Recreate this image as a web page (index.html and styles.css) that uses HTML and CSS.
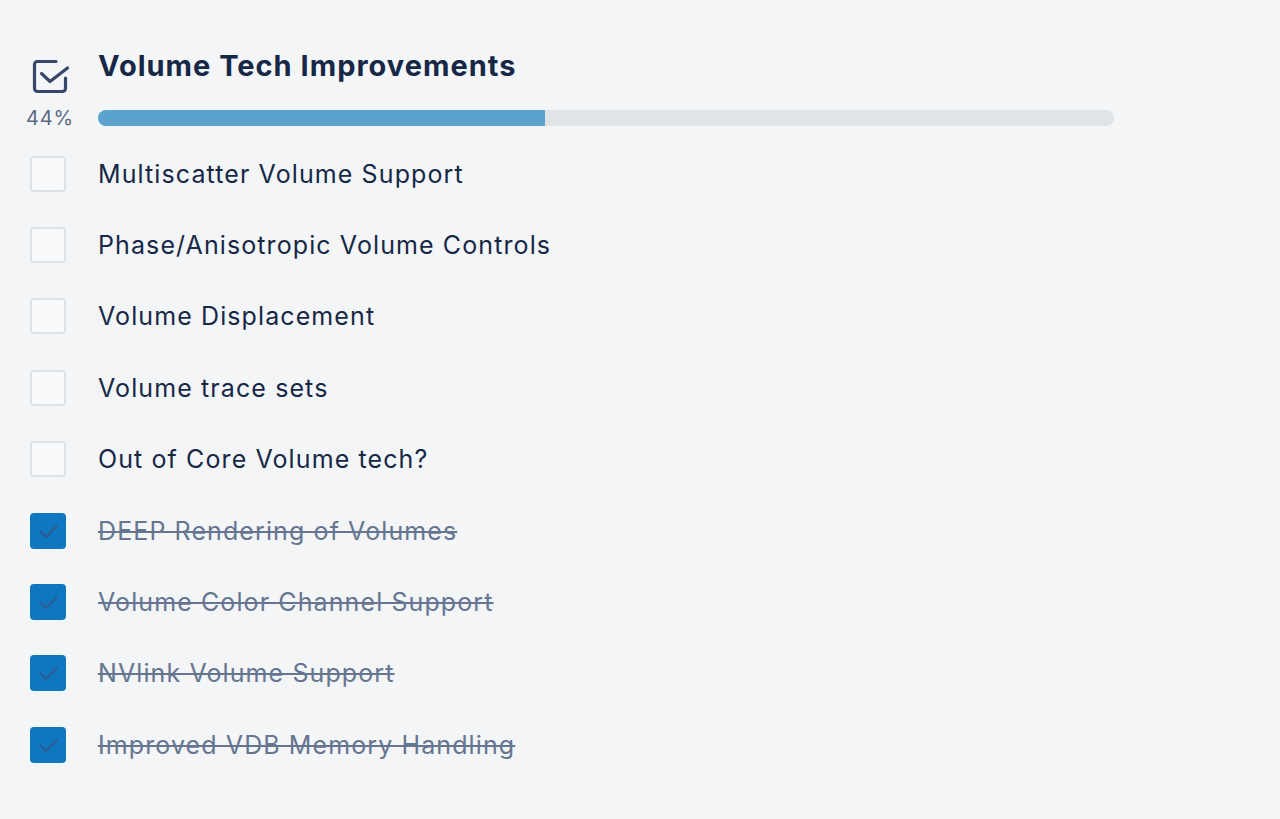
FILE: index.html
```html
<!DOCTYPE html>
<html>
<head>
<meta charset="utf-8">
<link rel="stylesheet" href="styles.css">
</head>
<body>
<div class="list">
  <div class="header">
    <div class="side">
      <svg class="hicon" viewBox="0 0 38 36" width="38" height="36">
        <path d="M33.5 20v10.5a3 3 0 0 1-3 3h-25a3 3 0 0 1-3-3v-24a3 3 0 0 1 3-3H24" fill="none" stroke="#38486a" stroke-width="3.2" stroke-linecap="round" stroke-linejoin="round"/>
        <path d="M9.5 15.5l8.5 8L35.5 10" fill="none" stroke="#38486a" stroke-width="3.2" stroke-linecap="round" stroke-linejoin="round"/>
      </svg>
      <div class="pct">44%</div>
    </div>
    <div class="main">
      <h1 class="title">Volume Tech Improvements</h1>
      <div class="bar"><div class="fill" style="width:44%"></div></div>
    </div>
  </div>
  <div class="items">
    <div class="item"><span class="box"></span><span class="label">Multiscatter Volume Support</span></div>
    <div class="item"><span class="box"></span><span class="label">Phase/Anisotropic Volume Controls</span></div>
    <div class="item"><span class="box"></span><span class="label">Volume Displacement</span></div>
    <div class="item"><span class="box"></span><span class="label">Volume trace sets</span></div>
    <div class="item"><span class="box"></span><span class="label">Out of Core Volume tech?</span></div>
    <div class="item done"><span class="box"><svg viewBox="0 0 36 36" width="36" height="36"><path d="M10.5 18.5l5.5 5.5 10.5-10.5" fill="none" stroke="#2c5d92" stroke-width="2.4" stroke-linecap="round" stroke-linejoin="round"/></svg></span><span class="label">DEEP Rendering of Volumes</span></div>
    <div class="item done"><span class="box"><svg viewBox="0 0 36 36" width="36" height="36"><path d="M10.5 18.5l5.5 5.5 10.5-10.5" fill="none" stroke="#2c5d92" stroke-width="2.4" stroke-linecap="round" stroke-linejoin="round"/></svg></span><span class="label">Volume Color Channel Support</span></div>
    <div class="item done"><span class="box"><svg viewBox="0 0 36 36" width="36" height="36"><path d="M10.5 18.5l5.5 5.5 10.5-10.5" fill="none" stroke="#2c5d92" stroke-width="2.4" stroke-linecap="round" stroke-linejoin="round"/></svg></span><span class="label">NVlink Volume Support</span></div>
    <div class="item done"><span class="box"><svg viewBox="0 0 36 36" width="36" height="36"><path d="M10.5 18.5l5.5 5.5 10.5-10.5" fill="none" stroke="#2c5d92" stroke-width="2.4" stroke-linecap="round" stroke-linejoin="round"/></svg></span><span class="label">Improved VDB Memory Handling</span></div>
  </div>
</div>
</body>
</html>
```
FILE: styles.css
```css
html, body {
  margin: 0;
  padding: 0;
  background: #f3f5f7;
}
body {
  font-family: Inter, "Noto Sans", "Liberation Sans", sans-serif;
  color: #172846;
}
.list {
  padding: 44px 0 0 24px;
  width: 1090px;
}
.header {
  display: flex;
  align-items: flex-start;
  gap: 26px;
}
.side {
  width: 48px;
  display: flex;
  flex-direction: column;
  align-items: center;
  padding-top: 14px;
}
.hicon {
  display: block;
  margin-left: 6px;
}
.pct {
  margin-top: 12px;
  margin-left: 4px;
  font-size: 20px;
  color: #5c6982;
  letter-spacing: 0.8px;
  line-height: 24px;
}
.main {
  flex: 1;
}
.title {
  margin: 0;
  font-size: 29px;
  font-weight: 700;
  letter-spacing: 1px;
  line-height: 44px;
  color: #172846;
}
.bar {
  margin-top: 22px;
  height: 16px;
  background: #e0e4e9;
  border-radius: 8px;
  overflow: hidden;
}
.fill {
  height: 100%;
  background: #5ba3cf;
}
.items {
  margin-top: 8px;
}
.item {
  display: flex;
  align-items: center;
  gap: 26px;
  height: 71.4px;
}
.box {
  width: 36px;
  height: 36px;
  margin: 0 6px;
  box-sizing: border-box;
  border: 2px solid #dde2e8;
  border-radius: 4px;
  background: #f8fafc;
  position: relative;
  flex-shrink: 0;
}
.done .box {
  background: #0f77c0;
  border-color: #0f77c0;
}
.done .box svg {
  position: absolute;
  left: -2px;
  top: -2px;
}
.label {
  font-size: 25px;
  letter-spacing: 1.1px;
  color: #172846;
}
.done .label {
  color: #667590;
  text-decoration: line-through;
  text-decoration-thickness: 2px;
}
```
